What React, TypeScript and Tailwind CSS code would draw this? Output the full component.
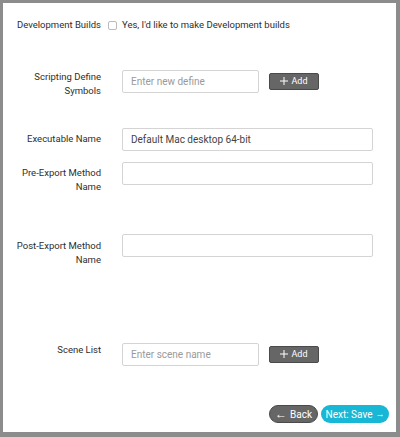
import React from 'react';

function Label({ children, className = '' }: { children: React.ReactNode; className?: string }) {
  return (
    <div className={`w-[98px] shrink-0 text-right leading-[14px] ${className}`}>{children}</div>
  );
}

function TextInput({ placeholder, value, wide }: { placeholder?: string; value?: string; wide?: boolean }) {
  return (
    <input
      readOnly
      placeholder={placeholder}
      defaultValue={value}
      className={`h-[23px] rounded-[2px] border border-[#d4d4d4] bg-white pl-2 text-[10px] text-[#444] placeholder:text-[#9a9a9a] outline-none ${
        wide ? 'w-[251px]' : 'w-[137px]'
      }`}
    />
  );
}

function AddButton() {
  return (
    <button className="ml-[10px] flex h-[17px] w-[50px] items-center justify-center gap-[3px] rounded-[2px] border border-[#4a4a4a] bg-[#666] text-[9px] text-white">
      <svg width="8" height="8" viewBox="0 0 8 8" className="mt-[-1px]">
        <path d="M4 0v8M0 4h8" stroke="white" strokeWidth="1" />
      </svg>
      Add
    </button>
  );
}

export default function App() {
  return (
    <div className="flex h-[437px] w-[400px] flex-col border-b-[5px] border-l-[3px] border-r-4 border-t-[3px] border-[#8c8c8c] bg-white font-['Roboto',sans-serif] text-[9.5px] text-[#2e2e2e]">
      {/* development builds */}
      <div className="mt-[15px] flex items-center">
        <Label>Development Builds</Label>
        <span className="ml-[7px] h-[9px] w-[9px] rounded-[2px] border border-[#bbb] bg-white" />
        <span className="ml-[5px] leading-[14px]">Yes, I'd like to make Development builds</span>
      </div>

      <div className="mt-[38px] flex items-start">
        <Label>
          Scripting Define
          <br />
          Symbols
        </Label>
        <div className="ml-[21px] flex items-center">
          <TextInput placeholder="Enter new define" />
          <AddButton />
        </div>
      </div>

      <div className="mt-[30px] flex items-start">
        <Label className="pt-1">Executable Name</Label>
        <div className="ml-[21px]">
          <TextInput wide value="Default Mac desktop 64-bit" />
        </div>
      </div>

      <div className="mt-[11px] flex items-start">
        <Label className="pt-1">
          Pre-Export Method
          <br />
          Name
        </Label>
        <div className="ml-[21px]">
          <TextInput wide />
        </div>
      </div>

      <div className="mt-[40px] flex items-start">
        <Label className="pt-[5px]">
          Post-Export Method
          <br />
          Name
        </Label>
        <div className="ml-[21px]">
          <TextInput wide />
        </div>
      </div>

      <div className="mt-[76px] flex items-start">
        <Label>Scene List</Label>
        <div className="ml-[21px] flex items-center">
          <TextInput placeholder="Enter scene name" />
          <AddButton />
        </div>
      </div>

      <div className="mt-[39px] flex justify-end gap-[3px] pr-[7px]">
        <button className="flex h-[18px] w-[49px] items-center justify-center gap-[3px] rounded-full border border-[#4a4a4a] bg-[#666] text-[10px] text-white">
          <span className="text-[12px] leading-none">←</span>Back
        </button>
        <button className="flex h-[18px] w-[68px] items-center justify-center gap-[3px] rounded-full bg-[#17b7d5] text-[10px] text-white">
          Next: Save <span className="text-[9px] leading-none">→</span>
        </button>
      </div>
    </div>
  );
}
